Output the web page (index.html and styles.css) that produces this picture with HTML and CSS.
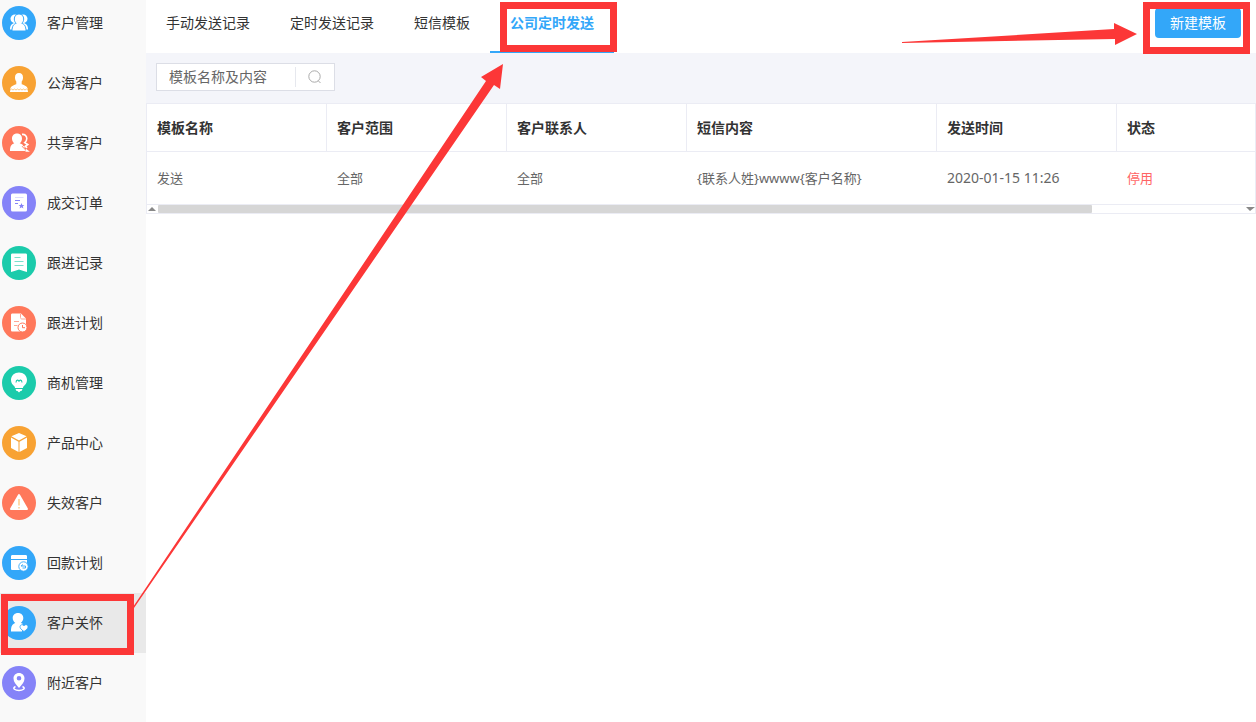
FILE: index.html
```html
<!DOCTYPE html>
<html lang="zh-CN">
<head>
<meta charset="utf-8">
<meta name="viewport" content="width=device-width, initial-scale=1">
<title>公司定时发送</title>
<link rel="stylesheet" href="styles.css">
</head>
<body>
<div class="app">
  <nav class="sidebar" aria-label="客户">
    <a class="nav-item" href="#">
      <svg class="nav-icon blue" viewBox="0 0 34 34" aria-hidden="true"><g fill="#fff"><circle cx="12.8" cy="12.8" r="4.3"/><circle cx="21.2" cy="12.8" r="4.3"/><path d="M8 23.5c0-4 1.300-5.500 4-6.500h10c2.700 1 4 2.500 4 6.500z"/></g><path d="M17 8c3 0 4.700 2.200 4.700 5 0 1.900-.8 3.400-1.900 4.300 2.700.9 4.200 3 4.200 7.700H10c0-4.700 1.500-6.800 4.200-7.700-1.100-.9-1.900-2.400-1.900-4.300 0-2.800 1.700-5 4.700-5z" fill="#fff" stroke="#33a7f9" stroke-width="1"/></svg>
      <span>客户管理</span>
    </a>
    <a class="nav-item" href="#">
      <svg class="nav-icon orange" viewBox="0 0 34 34" aria-hidden="true"><path d="M17 7c2.600 0 4 1.800 4 4.400 0 1.700-.5 3.200-1.300 4.200v2.600c2.700 1 5.800 1.800 6 4.800l.3 3H8l.3-3c.2-3 3.300-3.800 6-4.800v-2.600c-.8-1-1.300-2.500-1.300-4.200C13 8.800 14.400 7 17 7z" fill="#fff"/><path d="M8 24l1.500-1 1.500 1 1.500-1 1.500 1 1.500-1 1.500 1 1.500-1 1.500 1 1.500-1 1.500 1 1.500-1 1.500 1" fill="none" stroke="#fbc57a" stroke-width=".9"/></svg>
      <span>公海客户</span>
    </a>
    <a class="nav-item" href="#">
      <svg class="nav-icon coral" viewBox="0 0 34 34" aria-hidden="true"><path d="M15 7.500c3.200 0 5 2.300 5 5 0 2.200-.9 3.700-2.300 4.800 3.500 1 5.300 3 5.300 7.700H8c0-4.700 1.200-6.700 4.300-7.700C10.900 16.200 10 14.700 10 12.500c0-2.700 1.800-5 5-5z" fill="#fff"/><path d="M20 8.400c2.800-.4 4.800 1.400 4.800 4.200 0 2-.8 3.200-2 4.100l3 1.800-2.500 1.800 1.800 1.500M23.500 23.500l2 1.500h-2" fill="none" stroke="#fff" stroke-width="1.600"/><path d="M20.700 10c1 2.500.6 5-1 6.700l2.600 2.200-2 1.700 3 3" fill="none" stroke="#ff785b" stroke-width=".9"/></svg>
      <span>共享客户</span>
    </a>
    <a class="nav-item" href="#">
      <svg class="nav-icon violet" viewBox="0 0 34 34" aria-hidden="true"><rect x="9" y="7.500" width="16" height="18" rx="1.500" fill="#fff"/><path d="M13 11.500h8.500" stroke="#dddcff"/><path d="M13 14.500h5M13 17.500h3" stroke="#8583f8"/><path d="M19.500 17l.8 1.900 2.100.1-1.600 1.300.6 2.100-1.900-1.200-1.900 1.200.6-2.100-1.600-1.300 2.100-.1z" fill="#8583f8"/></svg>
      <span>成交订单</span>
    </a>
    <a class="nav-item" href="#">
      <svg class="nav-icon green" viewBox="0 0 34 34" aria-hidden="true"><path d="M10.500 7.500h13c1 0 1.500.5 1.500 1.500v17l-3.500-1-4.500-1.500-4.500 1.500L9 26V9c0-1 .5-1.500 1.500-1.500z" fill="#fff"/><path d="M12.500 11.500h6" stroke="#79e0cb"/><path d="M12.500 15.500h9M12.500 19.500h9" stroke="#79e0cb"/></svg>
      <span>跟进记录</span>
    </a>
    <a class="nav-item" href="#">
      <svg class="nav-icon coral" viewBox="0 0 34 34" aria-hidden="true"><path d="M10.500 7.500H19l5 5V19h-6v6.500h-7.500c-1 0-1.500-.5-1.500-1.500V9c0-1 .5-1.500 1.500-1.500z" fill="#fff"/><path d="M18.500 8v3.500c0 1 .5 1.500 1.500 1.500h4M12 15.500h5M12 19.500h3.500" fill="none" stroke="#ffa795"/><circle cx="20.500" cy="21.500" r="4.500" fill="#fff" stroke="#ff785b"/><path d="M20.500 19v2.700h2.500" fill="none" stroke="#ff785b"/></svg>
      <span>跟进计划</span>
    </a>
    <a class="nav-item" href="#">
      <svg class="nav-icon green" viewBox="0 0 34 34" aria-hidden="true"><path d="M17 6.500c4.500 0 8 3.100 8 7.500 0 3-1.600 4.800-3.300 6.300-.5.500-.7 1-.7 1.700h-8c0-.7-.2-1.200-.7-1.700C10.600 18.800 9 17 9 14c0-4.400 3.500-7.500 8-7.500zM13.500 23h7l-1 2h-1l-1.500 1.500-1.500-1.500h-1z" fill="#fff"/><path d="M14 16.500c.2-3 2.500-3 3-.8.500-2.200 2.800-2.200 3 .8" fill="none" stroke="#1bcbab" stroke-width="1.100"/></svg>
      <span>商机管理</span>
    </a>
    <a class="nav-item" href="#">
      <svg class="nav-icon orange" viewBox="0 0 34 34" aria-hidden="true"><path d="M17 7l7.600 3.300L17 14.500 9.400 10.300zM9 11.500l7.500 4.300V26L9 22zM25 11.500l-7.500 4.300V26l7.500-4z" fill="#fff"/></svg>
      <span>产品中心</span>
    </a>
    <a class="nav-item" href="#">
      <svg class="nav-icon coral" viewBox="0 0 34 34" aria-hidden="true"><path d="M17 9l8 14H9z" fill="#fff" stroke="#fff" stroke-width="2" stroke-linejoin="round"/><path d="M17 13v6.500M17 21v1.500" stroke="#ffc16d" stroke-width="1.200"/></svg>
      <span>失效客户</span>
    </a>
    <a class="nav-item" href="#">
      <svg class="nav-icon blue" viewBox="0 0 34 34" aria-hidden="true"><path d="M10.500 9h13c1 0 1.500.5 1.500 1.500V13H9v-2.500C9 9.500 9.500 9 10.500 9zM9 14h16v10H10.500c-1 0-1.500-.5-1.500-1.500z" fill="#fff"/><circle cx="21.500" cy="20.500" r="4.700" fill="#fff" stroke="#33a7f9" stroke-width=".9"/><path d="M21 18.500l-2 1.500h4.500v2h-3" fill="none" stroke="#33a7f9" stroke-width=".9"/></svg>
      <span>回款计划</span>
    </a>
    <a class="nav-item active" href="#" aria-current="page">
      <svg class="nav-icon blue" viewBox="0 0 34 34" aria-hidden="true"><path d="M16 7c3.300 0 5.300 2.300 5.300 5 0 2.200-1 3.800-2.600 4.900l1.800.6-.5 8H9c0-4.800.8-7.300 4.300-8.600-1.600-1.100-2.600-2.700-2.600-4.900 0-2.700 2-5 5.300-5z" fill="#fff"/><path d="M22 25.500c-3-2-4-3.300-4-4.700 0-2.300 2.900-2.800 4-.9 1.100-1.900 4-1.400 4 .9 0 1.400-1 2.700-4 4.700z" fill="#fff" stroke="#33a7f9" stroke-width=".8"/></svg>
      <span>客户关怀</span>
      <i class="mark mark-nav"></i>
    </a>
    <a class="nav-item" href="#">
      <svg class="nav-icon violet" viewBox="0 0 34 34" aria-hidden="true"><path d="M17 7c3.300 0 5.500 2.400 5.500 5.500C22.500 16 20 18.500 17 22c-3-3.500-5.500-6-5.500-9.500C11.500 9.400 13.700 7 17 7zm0 3a2.300 2.300 0 100 4.600 2.300 2.300 0 000-4.600z" fill="#fff" fill-rule="evenodd"/><path d="M13.500 20.500c-4 2 0 4 3.500 4s7.500-2 3.500-4" fill="none" stroke="#fff" stroke-width="1.600"/></svg>
      <span>附近客户</span>
    </a>
  </nav>

  <main class="content">
    <header class="topbar">
      <div class="tabs">
        <a class="tab" href="#">手动发送记录</a>
        <a class="tab" href="#">定时发送记录</a>
        <a class="tab" href="#">短信模板</a>
        <a class="tab current" href="#" aria-current="page">公司定时发送<i class="mark mark-tab"></i></a>
      </div>
      <div class="actions">
        <svg class="arrow-right" viewBox="0 0 236 24" aria-hidden="true"><path d="M0 20L212 7V1l23 11-22 11v-6L0 21z"/></svg>
        <button class="primary" type="button">新建模板</button>
        <i class="mark mark-button"></i>
      </div>
    </header>

    <form class="filter" role="search">
      <div class="search">
        <input class="search-input" type="text" placeholder="模板名称及内容" aria-label="模板名称及内容">
        <button class="search-button" type="button" aria-label="搜索">
          <svg viewBox="0 0 14 14" aria-hidden="true"><circle cx="6.500" cy="6.500" r="5.700"/><path d="M10.200 10.700l2.300 2.300"/></svg>
        </button>
      </div>
    </form>

    <div class="table-box">
      <table class="grid">
        <colgroup><col class="col"><col class="col"><col class="col"><col class="col-wide"><col class="col"><col></colgroup>
        <thead>
          <tr><th>模板名称</th><th>客户范围</th><th>客户联系人</th><th>短信内容</th><th>发送时间</th><th>状态</th></tr>
        </thead>
        <tbody>
          <tr><td>发送</td><td>全部</td><td>全部</td><td>{联系人姓}wwww{客户名称}</td><td class="time">2020-01-15 11:26</td><td class="off">停用</td></tr>
        </tbody>
      </table>
      <div class="scrollbar">
        <i class="up"></i>
        <div class="track"><div class="thumb"></div></div>
        <i class="down"></i>
      </div>
    </div>
  </main>

  <svg class="arrow-up" viewBox="0 0 372 544" aria-hidden="true"><path d="M0 543L353 17l-5-4 22-13-3 25-6-4L1 544z"/></svg>
</div>
</body>
</html>
```
FILE: styles.css
```css
* {
  box-sizing: border-box;
}

body {
  margin: 0;
  background: #fff;
  color: #333;
  font: 14px/20px "Noto Sans", "Noto Sans CJK SC", sans-serif;
}

a {
  color: inherit;
  text-decoration: none;
}

.app {
  position: relative;
  display: flex;
  height: 100vh;
  overflow: hidden;
}

/* Sidebar */
.sidebar {
  flex: none;
  width: 146px;
  background: #f9f9f9;
}

.nav-item {
  position: relative;
  display: flex;
  align-items: center;
  gap: 11px;
  height: 60px;
  padding-left: 2px;
}

.nav-item:first-child {
  margin-top: -7px;
}

.nav-item.active {
  background: #e9e9e9;
}

.nav-icon {
  width: 34px;
  height: 34px;
  border-radius: 50%;
}

.blue { background: #33a7f9; }
.orange { background: #f8a233; }
.coral { background: #ff785b; }
.violet { background: #8583f8; }
.green { background: #1bcbab; }

/* Top bar */
.content {
  flex: 1;
  min-width: 0;
}

.topbar {
  display: flex;
  justify-content: space-between;
  height: 53px;
}

.tabs {
  display: flex;
}

.tab {
  position: relative;
  padding: 13px 20px 18px;
  border-bottom: 2px solid transparent;
}

.tab.current {
  border-color: #33a7f9;
  color: #33a7f9;
  font-weight: 700;
}

.actions {
  position: relative;
  padding: 8px 15px 0 0;
}

.primary {
  width: 86px;
  height: 30px;
  padding: 0;
  border: 0;
  border-radius: 4px;
  background: #33a7f9;
  color: #fff;
  font: inherit;
}

/* Search */
.filter {
  height: 50px;
  padding: 10px;
  background: #f4f5fa;
}

.search {
  display: flex;
  align-items: center;
  width: 179px;
  height: 28px;
  border: 1px solid #dcdee6;
  background: #fff;
}

.search-input {
  flex: 1;
  min-width: 0;
  height: 20px;
  padding: 0 0 0 12px;
  border: 0;
  border-right: 1px solid #e6e8ee;
  background: none;
  color: #666;
  font: inherit;
}

.search-input::placeholder {
  color: #666;
}

.search-button {
  display: flex;
  align-items: center;
  justify-content: center;
  width: 38px;
  height: 26px;
  padding: 0;
  border: 0;
  background: none;
}

.search-button svg {
  width: 14px;
  height: 14px;
  fill: none;
  stroke: #aaa;
}

/* Table */
.table-box {
  border: 1px solid #ebecf4;
}

.grid {
  width: 100%;
  border-collapse: separate;
  border-spacing: 0;
  table-layout: fixed;
}

.col { width: 180px; }
.col-wide { width: 250px; }

.grid th,
.grid td {
  padding: 0 10px;
  border-bottom: 1px solid #ebecf4;
  text-align: left;
  white-space: nowrap;
}

.grid th {
  height: 48px;
  border-right: 1px solid #ebecf4;
}

.grid th:last-child {
  border-right: 0;
}

.grid td {
  height: 53px;
  color: #666;
  font-size: 13px;
}

.grid .time {
  font-size: 14px;
}

.grid .off {
  color: #ff6464;
}

.scrollbar {
  display: flex;
  align-items: center;
  height: 8px;
}

.up,
.down {
  width: 11px;
  height: 4px;
  background: #888;
}

.up { clip-path: polygon(1px 4px, 5px 0, 9px 4px); }
.down { clip-path: polygon(2px 0, 11px 0, 6px 4px); }

.track {
  flex: 1;
}

.thumb {
  width: 86%;
  height: 8px;
  border-radius: 1px;
  background: #d6d6d6;
}

/* Red callouts over the page */
.mark {
  position: absolute;
  border: 7px solid #fc3737;
}

.mark-nav {
  top: 1px;
  left: 1px;
  width: 133px;
  height: 61px;
}

.mark-tab {
  top: 2px;
  left: 10px;
  width: 117px;
  height: 50px;
}

.mark-button {
  top: 2px;
  right: 6px;
  width: 107px;
  height: 52px;
}

.arrow-right,
.arrow-up {
  position: absolute;
  fill: #fc3737;
  pointer-events: none;
}

.arrow-right {
  top: 22px;
  right: 118px;
  width: 236px;
  height: 24px;
}

.arrow-up {
  top: 64px;
  left: 133px;
  width: 372px;
  height: 544px;
}
```
